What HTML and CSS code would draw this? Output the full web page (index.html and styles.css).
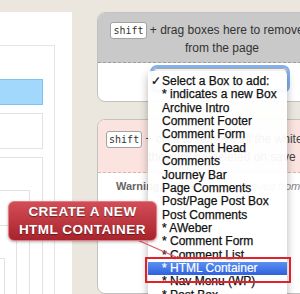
FILE: index.html
```html
<!DOCTYPE html>
<html lang="en">
<head>
    <meta charset="UTF-8">
    <title>Box Manager</title>
    <link rel="stylesheet" href="styles.css">
</head>
<body>

<div class="page">
    <div class="canvas">
        <div class="frame">
            <div class="box-selected"></div>
            <div class="slot slot-short"></div>
            <div class="slot slot-a">
                <div class="slot slot-b">
                    <div class="slot slot-c">
                        <div class="slot slot-d"></div>
                    </div>
                </div>
            </div>
        </div>
    </div>

    <div class="side">
        <div class="dropzone">
            <div class="dropzone-head">
                <span class="key">shift</span> + drag boxes here to remove them<br>
                from the page
            </div>
            <div class="dropzone-body">
                <div class="picker"></div>
            </div>
        </div>

        <div class="dropzone dropzone-remove">
            <div class="dropzone-head">
                <span class="key">shift</span> + click to remove all the white boxes<br>
                they will be deleted on save
            </div>
            <div class="dropzone-body">
                <b>Warning:</b> <i>boxes will be removed from</i>
            </div>
        </div>
    </div>
</div>

<!-- open dropdown of the picker -->
<ul class="menu">
    <li><span class="check">✓</span>Select a Box to add:</li>
    <li>* indicates a new Box</li>
    <li>Archive Intro</li>
    <li>Comment Footer</li>
    <li>Comment Form</li>
    <li>Comment Head</li>
    <li>Comments</li>
    <li>Journey Bar</li>
    <li>Page Comments</li>
    <li>Post/Page Post Box</li>
    <li>Post Comments</li>
    <li>* AWeber</li>
    <li>* Comment Form</li>
    <li>* Comment List</li>
    <li class="active">* HTML Container</li>
    <li>* Nav Menu (WP)</li>
    <li>* Post Box</li>
</ul>

<svg class="pointer" width="300" height="294">
    <line x1="135" y1="239" x2="176" y2="257" stroke="#e0556a" stroke-width="1.2"/>
</svg>

<div class="callout">CREATE A NEW<br>HTML CONTAINER</div>
<div class="mark"></div>

</body>
</html>
```

FILE: styles.css
```css
body {
    margin: 0;
    background-color: #ebe7df;
    font-family: "Liberation Sans", Arial, sans-serif;
    width: 300px;
    height: 294px;
    overflow: hidden;
    position: relative;
}
.page {
    display: flex;
    gap: 25px;
    padding-top: 12px;
    height: 282px;
    overflow: hidden;
}

/* left canvas with nested box outlines */
.canvas {
    width: 72px;
    flex: none;
    background: #fff;
    height: 282px;
}
.frame {
    margin-top: 33px;
    width: 54px;
    height: 300px;
    padding-top: 33px;
    border-top: 1px solid #e4e4e4;
    border-right: 1px solid #e4e4e4;
}
.box-selected {
    width: 42px;
    height: 24px;
    background: #a2d8fc;
    border: 1px solid #7fc3f0;
    border-left: none;
}
.slot {
    border: 1px solid #e2e2e2;
    border-left: none;
    border-bottom: none;
}
.slot-short {
    width: 42px;
    height: 34px;
    margin-top: 8px;
    border-bottom: 1px solid #e2e2e2;
}
.slot-a {
    width: 42px;
    height: 200px;
    margin-top: 8px;
    padding-top: 32px;
}
.slot-b {
    width: 29px;
    height: 200px;
    padding-top: 34px;
}
.slot-c {
    width: 16px;
    height: 200px;
    padding-top: 32px;
}
.slot-d {
    width: 4px;
    height: 200px;
}

/* right column */
.side {
    display: flex;
    flex-direction: column;
    gap: 17px;
    width: 250px;
    flex: none;
}
.dropzone {
    background: #fff;
    border: 1px solid #c2c2c2;
    border-radius: 8px;
    overflow: hidden;
}
.dropzone-head {
    background: #c9c9c9;
    height: 41px;
    padding-top: 8px;
    border-bottom: 1px dashed #9d9d9d;
    text-align: center;
    font-size: 12px;
    line-height: 18px;
    color: #333;
    white-space: nowrap;
}
.dropzone-body {
    height: 38px;
    padding: 5px 0 0 55px;
    box-sizing: border-box;
}
.picker {
    width: 132px;
    height: 20px;
    border-radius: 4px;
    border: 1px solid #a8a8a8;
    box-shadow: 0 0 0 3px #86b2ee;
}
.dropzone-remove .dropzone-head {
    background: #fbe4e0;
    height: 42px;
    padding-top: 10px;
    border-bottom-color: #dcb4ae;
    color: #444;
}
.dropzone-remove .dropzone-body {
    padding: 7px 0 0 18px;
    font-size: 11px;
    color: #666;
    height: 120px;
}
.dropzone-remove i {
    color: #888;
}
.key {
    display: inline-block;
    font-family: "DejaVu Sans Mono", monospace;
    font-size: 10px;
    line-height: 13px;
    padding: 1px 2px;
    color: #333;
    background: #fff;
    border: 1px solid #a3a3a3;
    border-radius: 3px;
}

/* open select menu */
.menu {
    position: absolute;
    left: 148px;
    top: 71px;
    width: 139px;
    margin: 0;
    padding: 4px 0;
    list-style: none;
    background: rgba(255, 255, 255, 0.94);
    border-radius: 4px;
    box-shadow: 0 3px 9px rgba(0, 0, 0, 0.3);
    font-size: 12px;
    color: #111;
}
.menu li {
    height: 13.36px;
    line-height: 13.36px;
    padding-left: 14px;
    white-space: nowrap;
    -webkit-text-stroke: 0.25px #111;
}
.menu .check {
    display: inline-block;
    width: 12px;
    margin-left: -12px;
    text-align: center;
}
.menu li.active {
    background: linear-gradient(#5b8ff2, #2f62dc);
    color: #fff;
    -webkit-text-stroke: 0.2px #fff;
}

/* annotation */
.pointer {
    position: absolute;
    left: 0;
    top: 0;
}
.callout {
    position: absolute;
    left: 8px;
    top: 201px;
    width: 147px;
    height: 37px;
    padding-top: 1px;
    border: 1px solid #e57a84;
    border-radius: 6px;
    background: linear-gradient(#d24d55, #a9232c);
    color: #fff;
    font-weight: bold;
    font-size: 13.5px;
    line-height: 18px;
    letter-spacing: 0.5px;
    text-align: center;
    text-shadow: 0 1px 1px rgba(0, 0, 0, 0.45);
    box-shadow: 0 1px 3px rgba(0, 0, 0, 0.3);
}
.mark {
    position: absolute;
    left: 145px;
    top: 257px;
    width: 142px;
    height: 22px;
    border: 2px solid #e3212b;
}
```
